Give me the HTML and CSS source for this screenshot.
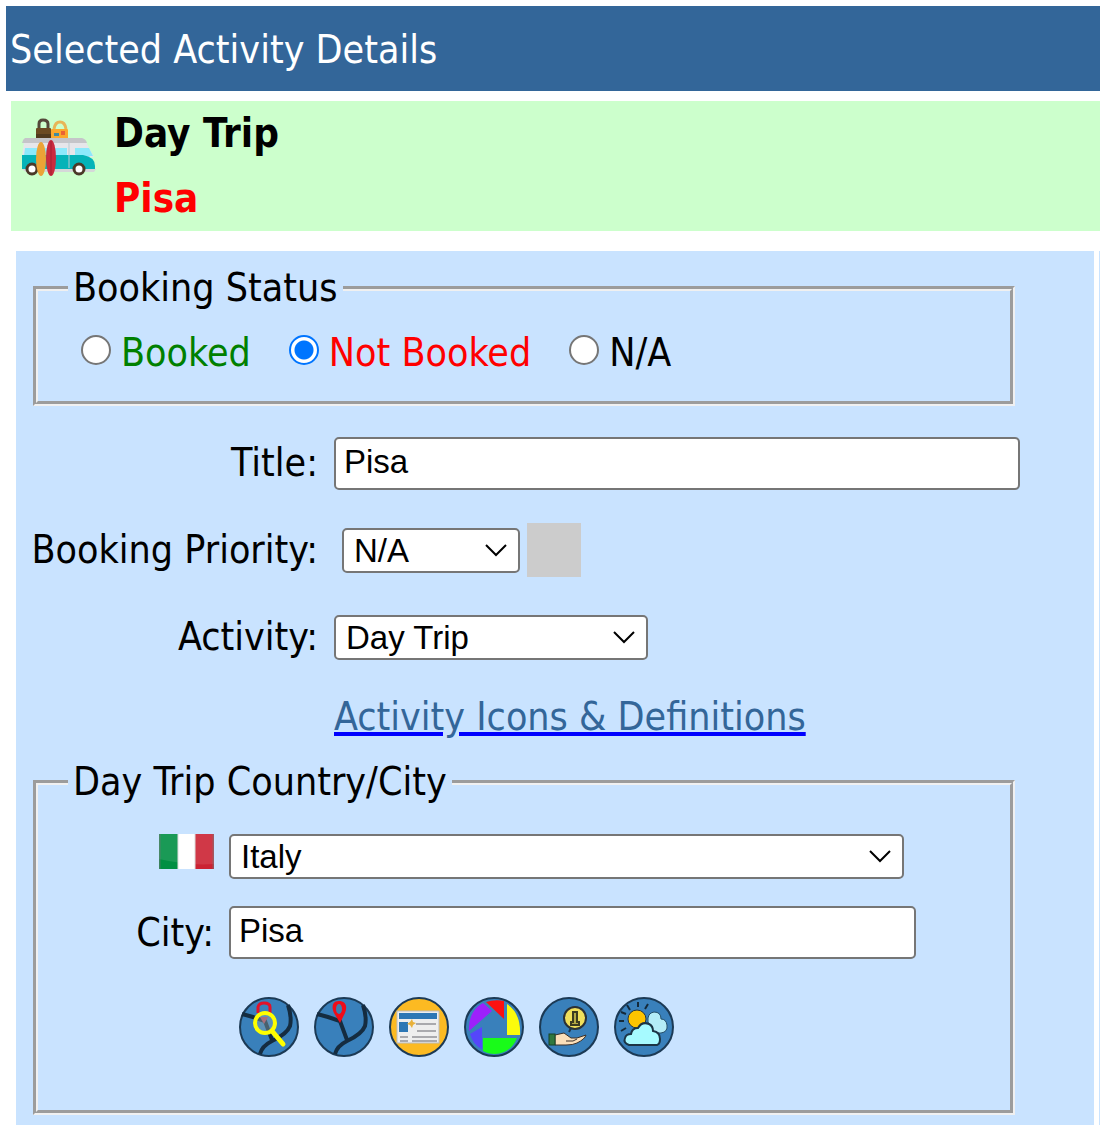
FILE: index.html
```html
<!DOCTYPE html>
<html lang="en">
  <head>
    <meta charset="UTF-8" />
    <meta name="viewport" content="width=device-width, initial-scale=1.0" />
    <title>Selected Activity Details</title>
    <link rel="stylesheet" href="styles.css">
  </head>
  <body>
    <header class="title-bar">Selected Activity Details</header>

    <div class="summary">
      <svg class="van" viewBox="0 0 76 60" aria-hidden="true">
        <path d="M18 11 V6 Q18 2 22 2 Q27 2 27 6 V11" fill="none" stroke="#54483a" stroke-width="3" />
        <path d="M33 11 Q34 4 39 4 Q44 4 45 11" fill="none" stroke="#e8b557" stroke-width="3" />
        <rect x="15" y="10" width="15" height="11" rx="1" fill="#6b4a22" />
        <rect x="15" y="16" width="15" height="5" fill="#513a1e" />
        <rect x="30" y="11" width="17" height="10" rx="1" fill="#fba82c" />
        <rect x="33" y="15" width="5" height="3" fill="#3f8aa0" />
        <rect x="40" y="13" width="4" height="4" fill="#ea6335" />
        <path d="M3 24 H65 L73 39 H1 Z" fill="#e6e6ea" />
        <path d="M4 20 H61 Q65 21 66 25 H1 Q2 21 4 20 Z" fill="#c5c5c9" />
        <path d="M4 30 H46 V38 H3 Z M54 30 H68 L72 38 H54 Z" fill="#8ce9fb" />
        <path d="M1 37 H62 Q74 39 74 48 V51 H1 Z" fill="#04b3b8" />
        <path d="M48 24 V50" stroke="#b9cbd1" />
        <path d="M1 51 H52 V54 H5 Z M64 51 H75 L73 54 H64 Z" fill="#d5d8d8" />
        <circle cx="11" cy="51" r="5" fill="#fff" stroke="#4b3928" stroke-width="3" />
        <circle cx="58" cy="51" r="5" fill="#fff" stroke="#4b3928" stroke-width="3" />
        <ellipse cx="20" cy="41" rx="5" ry="17" fill="#eba336" />
        <ellipse cx="30" cy="40" rx="5" ry="18" fill="#c92a3e" />
        <path d="M30 23 V57" stroke="#a51f33" />
      </svg>
      <div>
        <div class="summary-type">Day Trip</div>
        <div class="summary-name">Pisa</div>
      </div>
    </div>

    <div class="columns">
      <form class="panel">
        <fieldset class="status">
          <legend>Booking Status</legend>
          <div class="choices">
            <label class="booked"><input type="radio" name="status" />Booked</label>
            <label class="not-booked"><input type="radio" name="status" checked />Not Booked</label>
            <label><input type="radio" name="status" />N/A</label>
          </div>
        </fieldset>

        <div class="fields">
          <label for="title">Title:</label>
          <input type="text" id="title" value="Pisa" />

          <label for="priority">Booking Priority:</label>
          <div class="priority">
            <div class="select small">
              <select id="priority"><option>N/A</option></select>
              <svg viewBox="0 0 24 13"><path d="M2 1 L12 11 L22 1" /></svg>
            </div>
            <span class="swatch"></span>
          </div>

          <label for="activity">Activity:</label>
          <div class="select medium">
            <select id="activity"><option>Day Trip</option></select>
            <svg viewBox="0 0 24 13"><path d="M2 1 L12 11 L22 1" /></svg>
          </div>
          <a class="definitions" href="#"><span>Activity Icons &amp; Definitions</span></a>
        </div>

        <fieldset class="place">
          <legend>Day Trip Country/City</legend>
          <div class="place-fields">
            <label for="country" class="flag" aria-label="Country">
              <svg viewBox="0 0 55 35">
                <rect width="20" height="35" fill="#008f43" />
                <rect x="19" width="18" height="35" fill="#fff" />
                <rect x="36" width="19" height="35" fill="#cb2233" />
                <path d="M0 0 H55 V30 Q30 32 0 25 Z" fill="#fff" opacity=".1" />
                <path d="M0 0 V35 M55 0 V35" stroke="#777" stroke-width="3" opacity=".5" />
                <path d="M19 0 V35 M36 0 V35" stroke="#ddd" stroke-width="2" opacity=".5" />
              </svg>
            </label>
            <div class="select">
              <select id="country"><option>Italy</option></select>
              <svg viewBox="0 0 24 13"><path d="M2 1 L12 11 L22 1" /></svg>
            </div>
            <label for="city">City:</label>
            <input type="text" id="city" value="Pisa" />
          </div>

          <nav class="tools">
            <a href="#" aria-label="Search map">
              <svg viewBox="0 0 60 60">
                <circle class="disc" cx="30" cy="30" r="29" />
                <path class="road" d="M3 17 L14 20 L26 24 L33 43 M49 8 Q53 20 51 29 Q48 37 33 44 Q23 49 21 57" />
                <path d="M19 16 V10 Q20 6 25 6 Q31 6 31 10 V16" fill="none" stroke="#e31129" stroke-width="3" />
                <path d="M21 20 H29 L25 27 Z" fill="#b64456" />
                <path d="M33 34 L44 47" stroke="#ff0" stroke-width="5" stroke-linecap="round" />
                <circle cx="26" cy="26" r="10" fill="#95aeb4" fill-opacity=".4" stroke="#ff0" stroke-width="4" />
              </svg>
            </a>
            <a href="#" aria-label="Map">
              <svg viewBox="0 0 60 60">
                <circle class="disc" cx="30" cy="30" r="29" />
                <path class="road" d="M3 17 L14 20 L26 24 L33 43 M49 8 Q53 20 51 29 Q48 37 33 44 Q23 49 21 57" />
                <path d="M25 4 C17 4 18 12 20 16 L26 26 L31 16 C34 9 31 4 25 4 Z" fill="#f00b18" />
                <ellipse cx="25" cy="12" rx="3" ry="5" fill="#3f7cae" />
              </svg>
            </a>
            <a href="#" aria-label="Details">
              <svg viewBox="0 0 60 60">
                <circle class="disc gold" cx="30" cy="30" r="29" />
                <rect x="8" y="14" width="42" height="32" fill="#eee" stroke="#bbb" />
                <rect x="10" y="16" width="38" height="6" fill="#2d77b5" />
                <rect x="10" y="25" width="9" height="10" fill="#2d77b5" />
                <path d="M23 22 L24 25 L27 26 L24 28 L23 31 L21 28 L18 27 L21 25 Z" fill="#e9b13a" />
                <path d="M27 27 H47 M28 34 H47 M11 40 H19 M23 40 H48 M11 44 H19 M23 44 H48" stroke="#a9a9ad" stroke-width="2" />
              </svg>
            </a>
            <a href="#" aria-label="Photos">
              <svg viewBox="0 0 60 60">
                <circle class="disc" cx="30" cy="30" r="29" />
                <path d="M5 34 Q4 14 19 6 L28 14 Z" fill="#9d20fb" />
                <path d="M22 5 Q31 2 40 4 V22 Z" fill="#fb1111" />
                <path d="M43 7 Q57 16 56 38 H43 Z" fill="#fbfb0c" />
                <path d="M19 41 H53 Q47 56 31 57 Q24 57 19 54 Z" fill="#19fb19" />
                <path d="M6 37 L18 30 V52 Q9 48 6 37 Z" fill="#5546fb" />
              </svg>
            </a>
            <a href="#" aria-label="Costs">
              <svg viewBox="0 0 60 60">
                <circle class="disc" cx="30" cy="30" r="29" />
                <circle cx="36" cy="21" r="11" fill="#f0df5b" stroke="#2b3135" stroke-width="2" />
                <path d="M34 15 H38 V25 H40 V28 H32 V25 H34 Z" fill="#b5a945" stroke="#3c3a20" stroke-width="2" />
                <path d="M32 31 L30 35" stroke="#1b3348" stroke-width="2" />
                <path d="M16 38 L25 36 L32 41 H38 L47 38 Q46 42 38 46 Q34 48 27 48 H16 Z" fill="#fbdfb9" stroke="#3a302a" />
                <path d="M27 44 H34 L38 42" fill="none" stroke="#3a302a" />
                <rect x="10" y="37" width="6" height="11" fill="#30783e" stroke="#174326" />
              </svg>
            </a>
            <a href="#" aria-label="Weather">
              <svg viewBox="0 0 60 60">
                <circle class="disc" cx="30" cy="30" r="29" />
                <path d="M24 5 V10 M13 8 L16 13 M34 7 L31 12 M7 15 L12 17 M5 24 H10 M7 34 L12 31" stroke="#142a3b" stroke-width="2" />
                <circle cx="23" cy="22" r="9" fill="#fdc400" stroke="#2c3538" />
                <path d="M34 25 Q33 16 40 15 Q47 15 47 22 Q52 22 53 28 Q54 35 47 36 H40 Z" fill="#b4ecf7" stroke="#244e69" />
                <path d="M15 48 Q9 46 11 41 Q12 37 17 37 Q18 31 24 31 Q28 24 35 27 Q39 29 39 34 Q46 35 46 42 Q46 47 43 48 Z" fill="#a6faff" stroke="#1b3445" stroke-width="2" />
              </svg>
            </a>
          </nav>
        </fieldset>
      </form>
      <div class="next-panel"></div>
    </div>
  </body>
</html>
```
FILE: styles.css
```css
* {
  box-sizing: border-box;
}
body {
  font-family: "DejaVu Sans Condensed", Tahoma, sans-serif;
  font-size: 39px;
  line-height: 48px;
  margin: 6px 0 0 6px;
  min-height: calc(100vh - 6px);
  display: flex;
  flex-direction: column;
  background-color: #fff;
  color: #000;
}
.title-bar {
  background-color: #336699;
  color: #fff;
  line-height: 83px;
  padding: 2px 0 0 4px;
}
.summary {
  display: flex;
  gap: 17px;
  margin: 10px 0 20px 5px;
  padding-left: 10px;
  background-color: #ccffcc;
  font-size: 40px;
  font-weight: bold;
  line-height: 65px;
}
.van {
  width: 76px;
  height: 60px;
  margin-top: 17px;
}
.summary-name {
  color: #f00;
}
.columns {
  flex: 1;
  display: grid;
  grid-template-columns: 1fr 1px;
  gap: 5px;
  margin-left: 10px;
}
.panel,
.next-panel {
  background-color: #c9e3ff;
}
.panel {
  padding: 13px 74px 9px 12px;
}
fieldset {
  margin: 0 5px;
  border: 5px groove #f0f0f0;
  padding: 0 30px;
}
legend {
  padding: 0 5px;
}
.status {
  height: 142px;
}
.choices {
  display: flex;
  gap: 38px;
  margin: 17px 13px;
}
.choices label {
  display: flex;
  gap: 10px;
}
input[type="radio"] {
  appearance: none;
  width: 30px;
  height: 30px;
  margin: 6px 0 0;
  border: 2px solid #767676;
  border-radius: 50%;
  background-color: #fff;
}
input[type="radio"]:checked {
  border-color: #0075ff;
  background: radial-gradient(#0075ff 0 9px, #fff 10px);
}
.booked {
  color: #008000;
}
.not-booked {
  color: #f00;
}
.fields {
  display: grid;
  grid-template-columns: 290px 1fr;
  column-gap: 16px;
  row-gap: 33px;
  align-items: center;
  margin: 30px 0 21px;
}
.fields label,
.place-fields label {
  text-align: right;
  white-space: nowrap;
}
.fields label {
  line-height: 54px;
}
input[type="text"],
select {
  width: 100%;
  border: 2px solid #767676;
  border-radius: 5px;
  background-color: #fff;
  color: #000;
  font: 33px "Liberation Sans", Arial, sans-serif;
}
input[type="text"] {
  height: 53px;
  padding: 0 8px 3px;
}
select {
  display: block;
  appearance: none;
  height: 45px;
  padding: 0 10px;
}
.select {
  position: relative;
}
.select svg {
  position: absolute;
  right: 12px;
  top: 16px;
  width: 24px;
  height: 13px;
  fill: none;
  stroke: #000;
  stroke-width: 2;
  pointer-events: none;
}
.small {
  width: 178px;
}
.medium {
  width: 314px;
}
.priority {
  display: flex;
  align-items: center;
  gap: 7px;
  padding-left: 8px;
}
.swatch {
  width: 54px;
  height: 54px;
  background-color: #ccc;
}
.definitions {
  grid-column: 2;
  color: #0000ff;
  line-height: 40px;
  text-decoration-thickness: 4px;
}
.definitions span {
  color: #336699;
}
.place {
  height: 357px;
}
.place-fields {
  display: grid;
  grid-template-columns: 146px 1fr;
  column-gap: 15px;
  row-gap: 27px;
  align-items: center;
  margin: 28px 64px 38px 0;
}
.place-fields .select {
  margin-right: 12px;
}
.flag svg {
  display: block;
  width: 55px;
  height: 35px;
  margin: 0 0 10px auto;
}
.tools {
  display: flex;
  gap: 15px;
  margin-left: 171px;
}
.tools svg {
  display: block;
  width: 60px;
  height: 60px;
}
.disc {
  fill: #3980bb;
  stroke: #1c3a55;
  stroke-width: 2;
}
.gold {
  fill: #fcba22;
}
.road {
  fill: none;
  stroke: #152c40;
  stroke-width: 4;
}
```
